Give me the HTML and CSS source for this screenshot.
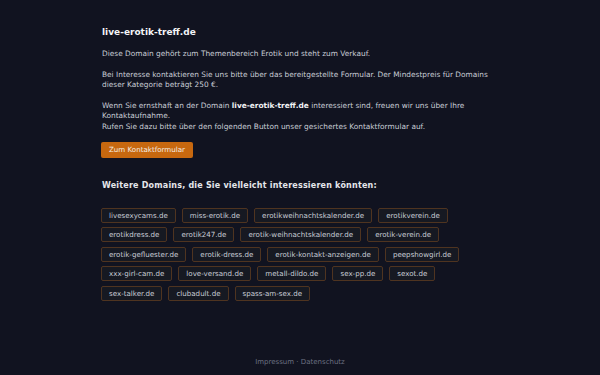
FILE: index.html
```html
<!DOCTYPE html>
<html lang="de">
<head>
<meta charset="UTF-8">
<meta name="viewport" content="width=device-width, initial-scale=1.0">
<title>live-erotik-treff.de</title>
<link rel="stylesheet" href="styles.css">
</head>
<body>
  <div class="page">
    <main class="container">
      <h1 class="title">live-erotik-treff.de</h1>
      <p>Diese Domain gehört zum Themenbereich Erotik und steht zum Verkauf.</p>
      <p>Bei Interesse kontaktieren Sie uns bitte über das bereitgestellte Formular. Der Mindestpreis für Domains dieser Kategorie beträgt 250 €.</p>
      <p>Wenn Sie ernsthaft an der Domain <strong>live-erotik-treff.de</strong> interessiert sind, freuen wir uns über Ihre Kontaktaufnahme.<br>Rufen Sie dazu bitte über den folgenden Button unser gesichertes Kontaktformular auf.</p>
      <a class="button" href="#">Zum Kontaktformular</a>

      <h2 class="subtitle">Weitere Domains, die Sie vielleicht interessieren könnten:</h2>
      <div class="tags">
        <a class="tag" href="#">livesexycams.de</a>
        <a class="tag" href="#">miss-erotik.de</a>
        <a class="tag" href="#">erotikweihnachtskalender.de</a>
        <a class="tag" href="#">erotikverein.de</a>
        <a class="tag" href="#">erotikdress.de</a>
        <a class="tag" href="#">erotik247.de</a>
        <a class="tag" href="#">erotik-weihnachtskalender.de</a>
        <a class="tag" href="#">erotik-verein.de</a>
        <a class="tag" href="#">erotik-gefluester.de</a>
        <a class="tag" href="#">erotik-dress.de</a>
        <a class="tag" href="#">erotik-kontakt-anzeigen.de</a>
        <a class="tag" href="#">peepshowgirl.de</a>
        <a class="tag" href="#">xxx-girl-cam.de</a>
        <a class="tag" href="#">love-versand.de</a>
        <a class="tag" href="#">metall-dildo.de</a>
        <a class="tag" href="#">sex-pp.de</a>
        <a class="tag" href="#">sexot.de</a>
        <a class="tag" href="#">sex-talker.de</a>
        <a class="tag" href="#">clubadult.de</a>
        <a class="tag" href="#">spass-am-sex.de</a>
      </div>
    </main>

    <footer class="footer">
      <a href="#">Impressum</a> · <a href="#">Datenschutz</a>
    </footer>
  </div>
</body>
</html>
```

FILE: styles.css
```css
html, body {
  margin: 0;
  background: #111320;
}

body {
  font-family: "DejaVu Sans", Verdana, sans-serif;
  font-size: 7.4px;
  line-height: 10.5px;
  color: #c9cdd6;
}

.page {
  display: flex;
  flex-direction: column;
  min-height: 100vh;
}

.container {
  width: 398px;
  margin: 0 auto;
  padding-top: 26px;
}

.title {
  margin: 0 0 11px 1px;
  font-size: 9px;
  line-height: 12px;
  color: #f3f4f6;
}

p {
  margin: 0 -6px 10px 1px;
}

p strong {
  color: #f3f4f6;
}

.button { /* orange call to action */
  display: inline-block;
  padding: 2px 8px;
  height: 12px;
  line-height: 12px;
  background: #c7680f;
  font-size: 7.1px;
  color: #f5efe6;
  text-decoration: none;
  border-radius: 2px;
}

.subtitle {
  margin: 22px 0 17px 1px;
  font-size: 8px;
  line-height: 11px;
  letter-spacing: 0.2px;
  color: #e5e7eb;
}

.tags {
  display: flex;
  flex-wrap: wrap;
  gap: 4.4px 6px;
}

.tag {
  display: block;
  height: 13px;
  line-height: 13px;
  padding: 0 7px;
  border: 1px solid #4f3420;
  border-radius: 2px;
  background: #161922;
  font-size: 7.1px;
  color: #c9cdd6;
  text-decoration: none;
}

.footer {
  margin-top: auto;
  padding: 6px 0 8px;
  text-align: center;
  font-size: 7px;
  color: #6b7080;
}

.footer a {
  color: #6b7080;
  text-decoration: none;
}
```
